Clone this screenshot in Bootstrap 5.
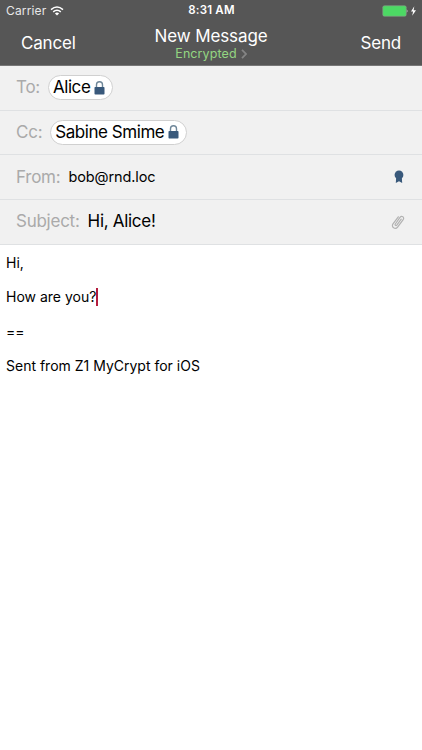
<!DOCTYPE html>
<html lang="en">
<head>
<meta charset="utf-8">
<meta name="viewport" content="width=device-width, initial-scale=1">
<title>New Message</title>
<link href="https://cdn.jsdelivr.net/npm/bootstrap@5.3.0/dist/css/bootstrap.min.css" rel="stylesheet">
<style>
body{font-family:Inter,"Liberation Sans",sans-serif;color:#000;background:#fff;line-height:1}
svg{display:block;flex:none}
.top-area{background:#565656;color:#fff;height:66px;border-bottom:1px solid #777}
.status{height:22px;font-size:12px;display:grid;grid-template-columns:1fr auto 1fr;padding:0 5px 0 6px}
.carrier{color:#e8e8e8;letter-spacing:.15px}
.clock{font-weight:600;font-size:11.5px;letter-spacing:.2px}
.bar{height:43px;display:grid;grid-template-columns:1fr auto 1fr;padding:0 21px}
.action{font-size:17px;color:#fff;letter-spacing:-.2px}
.heading{font-size:17px;letter-spacing:-.1px;line-height:20px;margin:0;font-weight:400}
.secure{font-size:12.5px;line-height:15px;color:#94d582;letter-spacing:.1px}
.fields{background:#f1f1f1}
.field{height:44.67px;border-bottom:1px solid #dfe1e3;padding:0 17px 0 16px}
.tag-label{color:#aaa;font-size:17px;letter-spacing:-.25px}
.pill{background:#fff;border:1px solid #d0d0d0;height:25px;border-radius:13px;font-size:17px;letter-spacing:-.45px;padding:0 7px 0 4px}
.mail{font-size:14.5px;letter-spacing:-.1px}
.subj{font-size:17px;letter-spacing:-.3px}
.message{font-size:14px;padding:9px 6px;line-height:17px}
.message p{margin:0 0 17px}
.caret{width:2px;height:18px;background:#b31c3d}
</style>
</head>
<body>
<header class="top-area">
  <div class="status align-items-center">
    <div class="d-flex align-items-center carrier"><span>Carrier</span>
      <svg class="ms-1" width="14" height="10" viewBox="0 0 14 10" fill="none" stroke="#fff" stroke-width="1.5"><path d="M1 3.6Q7-1.6 13 3.6M3.2 5.9Q7 2.6 10.8 5.9"/><path d="M4.9 7.4Q7 5.7 9.1 7.4L7 9.6Z" fill="#fff" stroke="none"/></svg>
    </div>
    <div class="clock">8:31 AM</div>
    <div class="d-flex justify-content-end align-items-center">
      <svg width="35" height="12" viewBox="0 0 35 12"><rect x=".8" y=".8" width="23.4" height="10.4" rx="1.5" fill="#4cd964" stroke="#8c9c8c" stroke-width=".6"/><path d="M24.8 4.2q1.6 1.8 0 3.6z" fill="#ddd"/><path d="M32.3 1.2L29 6.4h2.1L30.2 10.7 34 5.3h-2.4z" fill="#fff"/></svg>
    </div>
  </div>
  <nav class="bar align-items-center">
    <a class="action text-decoration-none" href="#">Cancel</a>
    <div class="text-center">
      <h1 class="heading">New Message</h1>
      <div class="secure d-flex justify-content-center align-items-center">Encrypted<svg class="ms-1" width="6" height="10" viewBox="0 0 6 10" fill="none" stroke="#858585" stroke-width="1.8"><path d="M1 .8L5 5 1 9.2"/></svg></div>
    </div>
    <a class="action text-decoration-none text-end" href="#">Send</a>
  </nav>
</header>
<main>
  <section class="fields">
    <div class="field d-flex align-items-center"><span class="tag-label">To:</span>
      <span class="pill d-flex align-items-center ms-2" id="alice">Alice<svg class="ms-1" width="11" height="14" viewBox="0 0 11 14"><path d="M2.5 7V3.8a3 3 0 0 1 6 0V7" fill="none" stroke="#6f8799" stroke-width="1.4"/><rect x=".5" y="6" width="10" height="7.5" rx=".8" fill="#39597b"/></svg></span>
    </div>
    <div class="field d-flex align-items-center"><span class="tag-label">Cc:</span>
      <span class="pill d-flex align-items-center ms-2">Sabine Smime<svg class="ms-1" width="11" height="14" viewBox="0 0 11 14"><path d="M2.5 7V3.8a3 3 0 0 1 6 0V7" fill="none" stroke="#6f8799" stroke-width="1.4"/><rect x=".5" y="6" width="10" height="7.5" rx=".8" fill="#39597b"/></svg></span>
    </div>
    <div class="field d-flex align-items-center"><span class="tag-label">From:</span><span class="mail ms-2">bob@rnd.loc</span>
      <svg class="ms-auto" width="12" height="14" viewBox="0 0 12 14" fill="#39597b"><circle cx="6" cy="4.9" r="4.4"/><path d="M3.2 7h5.6l.4 6L6 11.3 2.8 13z"/></svg>
    </div>
    <div class="field d-flex align-items-center"><span class="tag-label">Subject:</span><span class="subj ms-2">Hi, Alice!</span>
      <svg class="ms-auto" width="14" height="16" viewBox="0 0 14 16" fill="none" stroke="#b2b2b2" stroke-width="1.2" stroke-linecap="round"><path d="M10.2 5.2L5.8 11.1c-.8 1-2.3 0-1.5-1.1L9 3.4c1.7-2.2 4.8 0 3.2 2.2L6.6 13.1c-2.3 3-6.8-.1-4.6-3.2L7.3 2.8"/></svg>
    </div>
  </section>
  <section class="message">
    <p>Hi,</p>
    <p class="d-flex align-items-center">How are you?<span class="caret"></span></p>
    <p>==</p>
    <p>Sent from Z1 MyCrypt for iOS</p>
  </section>
</main>
<script src="https://cdn.jsdelivr.net/npm/bootstrap@5.3.0/dist/js/bootstrap.bundle.min.js"></script>
</body>
</html>
